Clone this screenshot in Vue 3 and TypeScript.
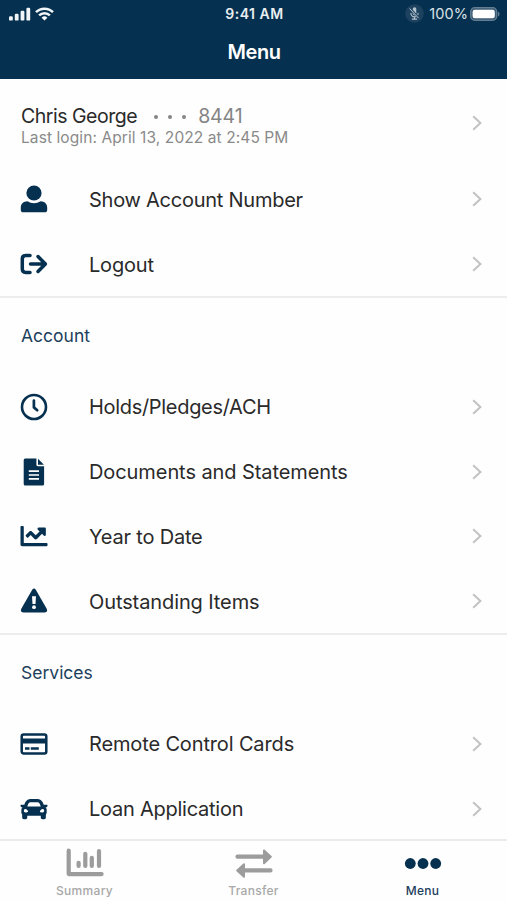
<script setup lang="ts">
type IconName = 'user' | 'logout' | 'clock' | 'document' | 'chart' | 'warning' | 'card' | 'car'

interface MenuItem {
  label: string
  icon: IconName
  tracking: number
}

interface MenuSection {
  title: string
  items: MenuItem[]
}

const profileItems: MenuItem[] = [
  { label: 'Show Account Number', icon: 'user', tracking: -0.25 },
  { label: 'Logout', icon: 'logout', tracking: -0.2 },
]

const sections: MenuSection[] = [
  { title: '', items: profileItems },
  {
    title: 'Account',
    items: [
      { label: 'Holds/Pledges/ACH', icon: 'clock', tracking: -0.31 },
      { label: 'Documents and Statements', icon: 'document', tracking: -0.08 },
      { label: 'Year to Date', icon: 'chart', tracking: -0.2 },
      { label: 'Outstanding Items', icon: 'warning', tracking: -0.1 },
    ],
  },
  {
    title: 'Services',
    items: [
      { label: 'Remote Control Cards', icon: 'card', tracking: -0.14 },
      { label: 'Loan Application', icon: 'car', tracking: -0.25 },
    ],
  },
]
</script>

<template>
  <div class="screen">
    <header class="header">
      <div class="status">
        <div class="status-left">
          <svg class="signal" width="22" height="14" viewBox="0 0 22 14" fill="#f2f5f7">
            <rect x="0" y="9.200" width="3.800" height="4.400" rx="1.2" />
            <rect x="5.800" y="6.700" width="3.800" height="6.900" rx="1.2" />
            <rect x="11.600" y="3.800" width="3.800" height="9.800" rx="1.2" />
            <rect x="17.400" y="0.800" width="3.800" height="12.800" rx="1.2" />
          </svg>
          <svg class="wifi" width="19" height="14" viewBox="0 0 19 14" fill="none" stroke="#f2f5f7" stroke-width="2.5">
            <path d="M1 5.2a12.1 12.1 0 0 1 17 0" />
            <path d="M4.1 8.4a7.7 7.7 0 0 1 10.8 0" />
            <path d="M9.5 13.6 6.6 10.7a4.1 4.1 0 0 1 5.8 0z" fill="#fff" stroke="none" />
          </svg>
        </div>
        <div class="status-time">9:41 AM</div>
        <div class="status-right">
          <svg width="19" height="19" viewBox="0 0 19 19">
            <circle cx="9.5" cy="9.5" r="9.3" fill="#1d4260" />
            <g fill="none" stroke="#b4c2cd" stroke-linecap="round">
              <path d="M9.5 5v4.6" stroke-width="3.6" />
              <path d="M5.9 9.2a3.6 3.6 0 0 0 7.2 0M9.5 12.8v2.2M7.3 15.1h4.4" stroke-width="1.1" />
              <path d="M5.3 4.7l8 8.8" stroke="#264a67" stroke-width="2.2" />
              <path d="M4.9 4.9l8.4 9" stroke-width="1" />
            </g>
          </svg>
          <span class="percent">100%</span>
          <svg class="battery" width="30" height="14" viewBox="0 0 30 14">
            <rect x="0.7" y="0.7" width="26" height="12.6" rx="4" fill="#3c5b74" stroke="#647f93" stroke-width="1.3" />
            <rect x="2.600" y="2.700" width="22.200" height="8.600" rx="2.200" fill="#fff" />
            <path d="M28 4.5c2 .9 2 4.1 0 5z" fill="#647f93" />
          </svg>
        </div>
      </div>
      <h1 class="title">Menu</h1>
    </header>

    <main class="content">
      <section v-for="(section, index) in sections" :key="index" class="section">
        <div v-if="!section.title" class="profile">
          <div>
            <div class="profile-name">
              <span class="name">Chris George</span>
              <span class="mask"><i></i><i></i><i></i></span>
              <span class="digits">8441</span>
            </div>
            <div class="last-login">Last login: April 13, 2022 at 2:45 PM</div>
          </div>
          <svg class="chevron" width="10" height="16" viewBox="0 0 10 16"><path d="M1.2 1.2 8.4 8 1.2 14.8" /></svg>
        </div>
        <h2 v-else class="section-title">{{ section.title }}</h2>

        <div v-for="item in section.items" :key="item.label" class="row">
          <svg class="icon" width="28" height="28" viewBox="0 0 28 28">
            <template v-if="item.icon === 'user'">
              <circle cx="14" cy="8" r="7.6" />
              <path d="M7.5 16.3C9.400 17.600 11.600 18.200 14 18.200s4.600-.6 6.500-1.900c4 .2 6.700 2.600 6.700 6.400v2.200c0 1.500-1 2.400-2.400 2.400H3.200C1.800 27.300.8 26.400.8 24.900v-2.200c0-3.800 2.700-6.200 6.700-6.400z" />
            </template>
            <g v-else-if="item.icon === 'logout'" class="line" stroke-width="3.5">
              <path d="M10 5.600H5.700Q2.300 5.600 2.300 9V19Q2.300 22.400 5.700 22.400H10" />
              <path d="M10.500 14H25M18 6.600 25.400 14 18 21.400" />
            </g>
            <g v-else-if="item.icon === 'clock'" class="line">
              <circle cx="14" cy="14" r="12" stroke-width="2.600" />
              <path d="M13.900 7.500V14.400L17.200 17.200" stroke-width="2.700" />
            </g>
            <template v-else-if="item.icon === 'document'">
              <path d="M5.200.6H16.400V6.800Q16.400 8.200 17.800 8.200H24.100V26Q24.100 27.600 22.500 27.600H5.300Q3.700 27.600 3.700 26V2.100Q3.700.6 5.200.6zM18 .8 23.900 6.700H18z" />
              <path class="cut" d="M8.800 13.100H19M8.800 17H19M8.800 20.900H19" stroke-width="1.700" />
            </template>
            <path
              v-else-if="item.icon === 'chart'"
              transform="translate(.5 .5) scale(.0528)"
              d="M496 390H62V80c0-9-7-16-16-16H16C7 64 0 71 0 80v336c0 18 14 32 32 32h464c9 0 16-7 16-16v-26c0-9-7-16-16-16zM464 96H346c-21 0-32 26-17 41l32 32-73 74-73-74c-13-12-33-12-46 0l-68 69c-7 6-7 17 0 23l22 22c7 7 17 7 23 0l46-46 73 74c13 12 33 12 46 0l96-96 32 32c15 15 41 4 41-17V112c0-9-7-16-16-16z"
            />
            <template v-else-if="item.icon === 'warning'">
              <path d="M12.200 2.800Q14 0 15.800 2.800L26.700 21.800Q28.200 25.200 24.800 25.400H3.200Q-.2 25.200 1.300 21.800z" />
              <path d="M12 9.300h4l-.5 7.800h-3z" fill="#fff" />
              <circle cx="14" cy="20.200" r="1.900" fill="#fff" />
            </template>
            <template v-else-if="item.icon === 'card'">
              <rect x="1.700" y="4.600" width="24.600" height="18.900" rx="2" class="line" stroke-width="2.500" />
              <path d="M1.500 8.400h25v5h-25zM5 17.300h4.500v2.400H5zM10.800 17.300h8v2.400h-8z" />
            </template>
            <path
              v-else
              transform="translate(.5 .5) scale(.0528)"
              d="M500 176h-60l-17-42C406 92 366 64 320 64H192c-46 0-87 28-104 70l-16 42H12c-8 0-14 7-12 15l6 24c2 5 6 9 12 9h20c-13 12-22 29-22 48v48c0 16 6 31 16 42v54c0 18 14 32 32 32h32c18 0 32-14 32-32v-32h256v32c0 18 14 32 32 32h32c18 0 32-14 32-32v-54c10-11 16-26 16-42v-48c0-19-9-36-22-48h20c6 0 10-4 12-9l6-24c2-8-4-15-12-15zM148 158c7-18 25-30 44-30h128c19 0 37 12 44 30l20 50H128zM96 320c-19 0-32-13-32-32s13-32 32-32 48 29 48 48-29 16-48 16zm320 0c-19 0-48 3-48-16s29-48 48-48 32 13 32 32-13 32-32 32z"
            />
          </svg>
          <span class="label" :style="{ letterSpacing: `${item.tracking}px` }">{{ item.label }}</span>
          <svg class="chevron" width="10" height="16" viewBox="0 0 10 16"><path d="M1.2 1.2 8.4 8 1.2 14.8" /></svg>
        </div>
      </section>
    </main>

    <nav class="tabs">
      <div class="tab">
        <svg width="38" height="30" viewBox="0 0 38 30" fill="none" stroke="#9c9c9c" stroke-linecap="round" stroke-linejoin="round">
          <path d="M2.700 2.700V26.100H35.600" stroke-width="4.200" />
          <path d="M12.600 14.800V18M19.300 5.800V18M25.800 9.800V18M33 3.200V18" stroke-width="4.200" />
        </svg>
        <span>Summary</span>
      </div>
      <div class="tab">
        <svg width="38" height="30" viewBox="0 0 38 30" fill="#9c9c9c" stroke="#9c9c9c" stroke-linejoin="round" stroke-linecap="round">
          <path d="M2.500 8.700H29M35.500 22.400H9" stroke-width="4.200" />
          <path d="M29 2.500 35.800 8.700 29 15.200zM9 16.200 2.200 22.400 9 28.700z" stroke-width="2" />
        </svg>
        <span>Transfer</span>
      </div>
      <div class="tab active">
        <svg width="38" height="30" viewBox="0 0 38 30" fill="#06304f">
          <circle cx="6.300" cy="15.500" r="5.400" />
          <circle cx="19" cy="15.500" r="5.400" />
          <circle cx="31.700" cy="15.500" r="5.400" />
        </svg>
        <span>Menu</span>
      </div>
    </nav>
  </div>
</template>

<style>
body {
  margin: 0;
  background: #fff;
}
</style>

<style scoped>
.screen {
  width: 507px;
  height: 900px;
  display: flex;
  flex-direction: column;
  overflow: hidden;
  background: #fefefe;
  font-family: Inter, "Liberation Sans", sans-serif;
  color: #2a2a2a;
}

.header {
  flex: none;
  height: 79px;
  background: #06304f;
  color: #fff;
}

.status {
  display: grid;
  grid-template-columns: 1fr auto 1fr;
  align-items: center;
  height: 27px;
  padding: 0 7px 0 9px;
}

.status-left,
.status-right {
  display: flex;
  align-items: center;
}

.wifi {
  margin-left: 4px;
}

.status-time {
  font-size: 14px;
  font-weight: 600;
  letter-spacing: 0.5px;
  color: #e9eef1;
}

.status-right {
  justify-content: flex-end;
}

.percent {
  margin: 0 2px 0 5px;
  font-size: 14.5px;
  letter-spacing: 0.1px;
  color: #dce3e8;
}

.title {
  margin: 0;
  padding-left: 1px;
  text-align: center;
  font-size: 20px;
  line-height: 51px;
  font-weight: 600;
  letter-spacing: -0.4px;
}

.content {
  flex: none;
  height: 760px;
  overflow: hidden;
}

.section + .section {
  border-top: 2px solid #ededed;
  margin-top: -1px;
}

.profile {
  display: flex;
  align-items: center;
  justify-content: space-between;
  height: 88px;
  padding: 0 25px 0 21px;
  box-sizing: border-box;
}

.profile-name {
  display: flex;
  align-items: center;
  margin-top: 5px;
  font-size: 19.5px;
  line-height: 22px;
}

.name {
  letter-spacing: -0.48px;
}

.mask {
  display: flex;
  gap: 10px;
  margin: 2px 12px 0 17px;
}

.mask i {
  width: 4px;
  height: 4px;
  border-radius: 50%;
  background: #858585;
}

.digits {
  color: #858585;
  letter-spacing: -0.1px;
}

.last-login {
  margin-top: 1px;
  font-size: 15.5px;
  line-height: 19px;
  letter-spacing: 0.09px;
  color: #8a8a8a;
}

.section-title {
  margin: 0;
  height: 77px;
  padding-left: 21px;
  font-size: 17.5px;
  line-height: 76px;
  font-weight: 400;
  color: #1c405c;
}

.row {
  display: flex;
  align-items: center;
  height: 64.75px;
  padding: 0 25px 0 20px;
}

.icon {
  flex: none;
  fill: #06304f;
  overflow: visible;
}

.line {
  fill: none;
  stroke: #06304f;
  stroke-linecap: round;
  stroke-linejoin: round;
}

.cut {
  fill: none;
  stroke: #fff;
}

.label {
  flex: 1;
  margin-left: 41px;
  padding-top: 1px;
  font-size: 20px;
  white-space: nowrap;
}

.chevron {
  flex: none;
  fill: none;
  stroke: #c2c2c2;
  stroke-width: 2;
}

.tabs {
  flex: none;
  display: grid;
  grid-template-columns: repeat(3, 1fr);
  height: 61px;
  box-sizing: border-box;
  border-top: 2px solid #ebebeb;
  background: #fefefe;
}

.tab {
  display: flex;
  flex-direction: column;
  align-items: center;
  padding-top: 7px;
  font-size: 12px;
  font-weight: 500;
  line-height: 16px;
  letter-spacing: 0.3px;
  color: #a8a8a8;
}

.tab span {
  margin-top: 5px;
}

.tab.active {
  color: #1c405c;
}
</style>
